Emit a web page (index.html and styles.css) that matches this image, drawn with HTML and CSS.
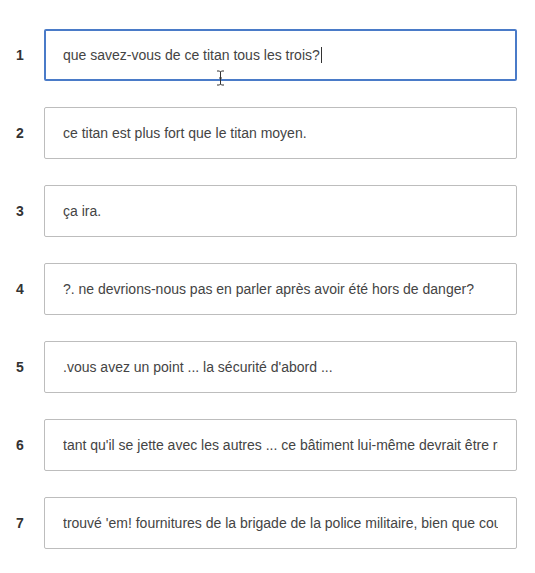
FILE: index.html
```html
<!DOCTYPE html>
<html lang="fr">
<head>
<meta charset="utf-8">
<link rel="stylesheet" href="styles.css">
</head>
<body>
<div class="list">
  <div class="row"><span class="num">1</span><div class="box active"><span class="txt">que savez-vous de ce titan tous les trois?</span><span class="caret"></span></div></div>
  <div class="row"><span class="num">2</span><div class="box"><span class="txt">ce titan est plus fort que le titan moyen.</span></div></div>
  <div class="row"><span class="num">3</span><div class="box"><span class="txt">ça ira.</span></div></div>
  <div class="row"><span class="num">4</span><div class="box"><span class="txt">?. ne devrions-nous pas en parler après avoir été hors de danger?</span></div></div>
  <div class="row"><span class="num">5</span><div class="box"><span class="txt">.vous avez un point ... la sécurité d'abord ...</span></div></div>
  <div class="row"><span class="num">6</span><div class="box"><span class="txt">tant qu'il se jette avec les autres ... ce bâtiment lui-même devrait être re</span></div></div>
  <div class="row"><span class="num">7</span><div class="box"><span class="txt">trouvé 'em! fournitures de la brigade de la police militaire, bien que cou</span></div></div>
</div>
<svg class="ibeam" width="9" height="16" viewBox="0 0 9 16"><path d="M1 1h2.5l1 1 1-1H8M1 15h2.5l1-1 1 1H8M4.5 2v12M3 8h3" fill="none" stroke="#333" stroke-width="1"/></svg>
</body>
</html>
```
FILE: styles.css
```css
html, body {
  margin: 0;
  padding: 0;
  background: #fff;
}
body {
  font-family: "Liberation Sans", Arial, sans-serif;
  position: relative;
  width: 535px;
  height: 573px;
  overflow: hidden;
}
.list {
  display: flex;
  flex-direction: column;
  gap: 26px;
  padding-top: 29px;
}
.row {
  display: flex;
  align-items: center;
}
.num {
  width: 28px;
  padding-left: 16px;
  font-size: 14px;
  font-weight: bold;
  color: #333;
}
.box {
  box-sizing: border-box;
  width: 473px;
  height: 52px;
  border: 1px solid #bdbdbd;
  border-radius: 2px;
  padding: 0 18px 0 18px;
  display: flex;
  align-items: center;
  overflow: hidden;
  white-space: nowrap;
  font-size: 14px;
  color: #444;
}
.box.active {
  border: 2px solid #4a7bc8;
  padding-left: 17px;
}
.txt {
  overflow: hidden;
  white-space: nowrap;
}
.caret {
  display: inline-block;
  width: 1px;
  height: 16px;
  background: #333;
  margin-left: 1px;
}
.ibeam {
  position: absolute;
  left: 216px;
  top: 70px;
}
```
